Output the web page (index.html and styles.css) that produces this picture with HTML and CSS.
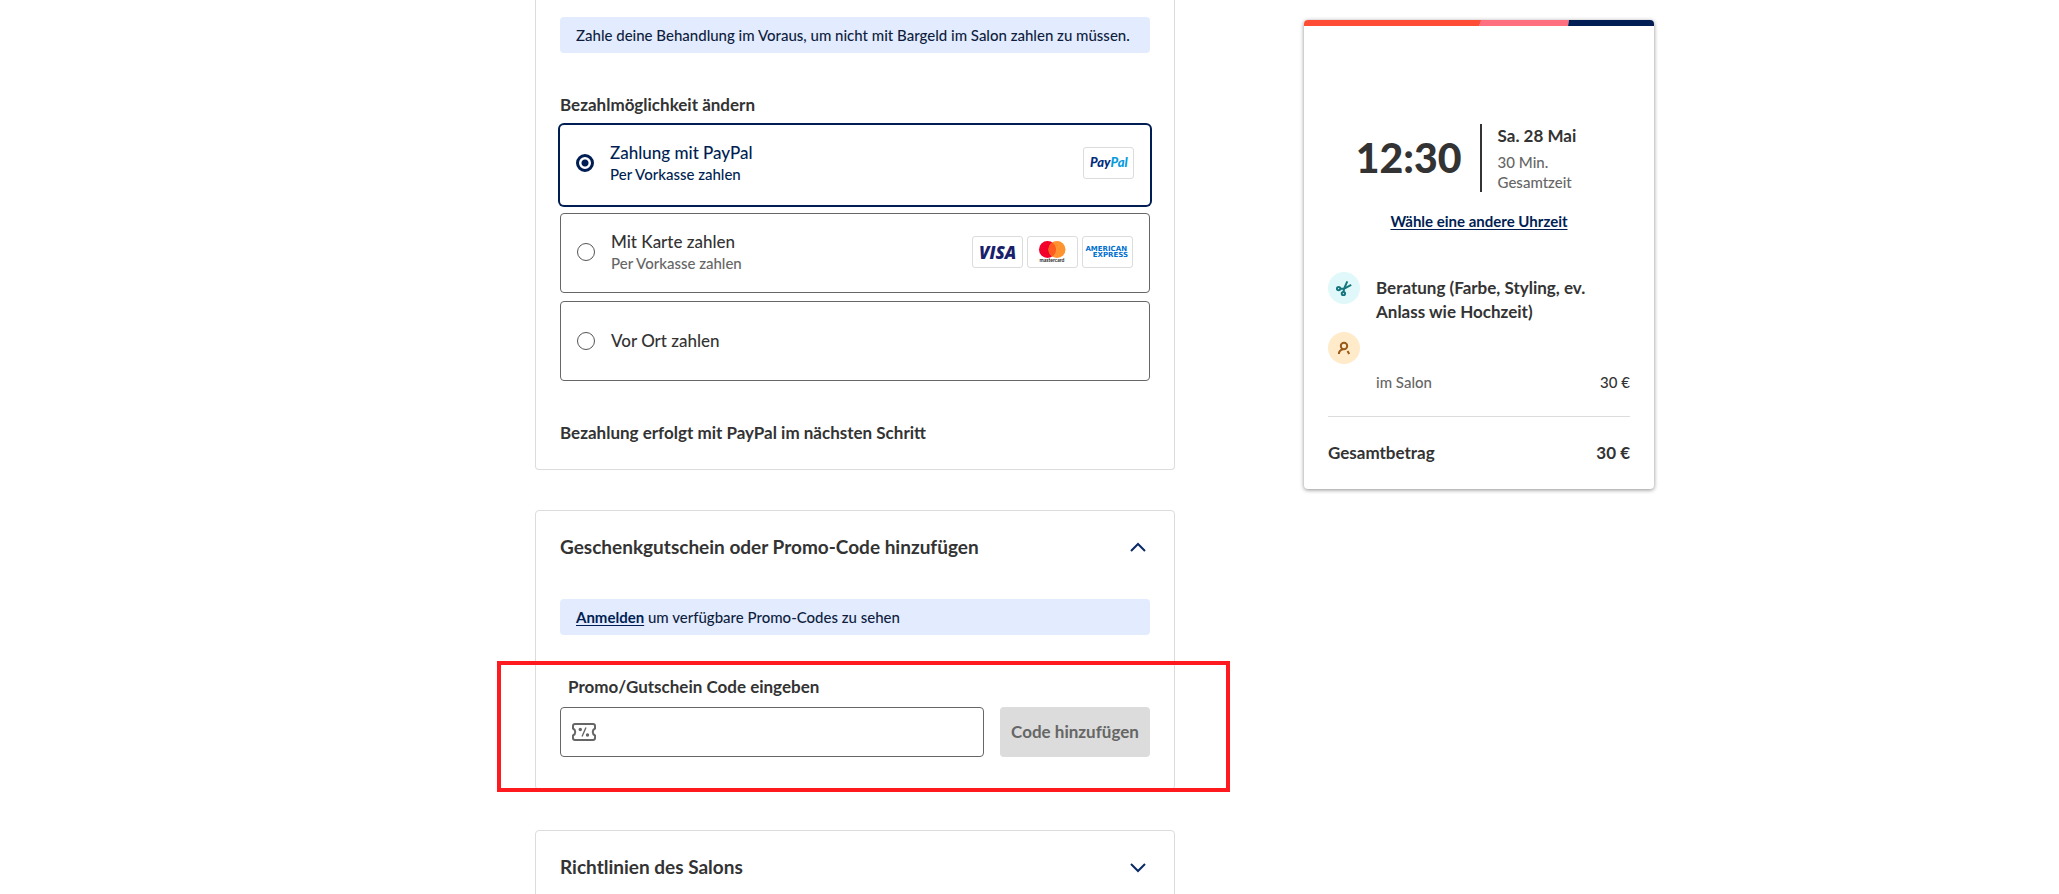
FILE: index.html
```html
<!DOCTYPE html>
<html lang="de">
<head>
<meta charset="utf-8">
<meta name="viewport" content="width=device-width, initial-scale=1">
<title>Bezahlung</title>
<link rel="stylesheet" href="styles.css">
</head>
<body>
<div class="page">
  <main class="steps">
    <section class="card card-payment">
      <p class="notice">Zahle deine Behandlung im Voraus, um nicht mit Bargeld im Salon zahlen zu müssen.</p>
      <fieldset class="methods">
        <legend class="methods-title">Bezahlmöglichkeit ändern</legend>
        <label class="method method-selected">
          <input class="radio" type="radio" name="method" checked>
          <span class="method-text">
            <span class="method-name">Zahlung mit PayPal</span>
            <span class="method-sub">Per Vorkasse zahlen</span>
          </span>
          <span class="logos">
            <svg class="logo" viewBox="1 1 49 30" role="img" aria-label="PayPal"><text x="7" y="20" class="paypal"><tspan fill="#012c7c">Pay</tspan><tspan fill="#069bdd">Pal</tspan></text></svg>
          </span>
        </label>
        <label class="method">
          <input class="radio" type="radio" name="method">
          <span class="method-text">
            <span class="method-name">Mit Karte zahlen</span>
            <span class="method-sub">Per Vorkasse zahlen</span>
          </span>
          <span class="logos">
            <svg class="logo" viewBox="1 1 49 30" role="img" aria-label="Visa"><text x="7" y="23" class="visa">VISA</text></svg>
            <svg class="logo" viewBox="1 1 49 30" role="img" aria-label="Mastercard"><circle cx="20.500" cy="13.500" r="8.500" fill="#f2002b"/><circle cx="30" cy="13.500" r="8.500" fill="#ff9330"/><path d="M25.250 6.450a8.500 8.500 0 0 1 0 14.100a8.500 8.500 0 0 1 0-14.100z" fill="#ff5a1f"/><text x="25" y="26" class="mastercard">mastercard</text></svg>
            <svg class="logo" viewBox="1 1 49 30" role="img" aria-label="American Express"><text x="45" y="15" class="amex">AMERICAN</text><text x="46" y="21" class="amex">EXPRESS</text></svg>
          </span>
        </label>
        <label class="method method-plain">
          <input class="radio" type="radio" name="method">
          <span class="method-text"><span class="method-name">Vor Ort zahlen</span></span>
        </label>
      </fieldset>
      <p class="next-step">Bezahlung erfolgt mit PayPal im nächsten Schritt</p>
    </section>

    <section class="card card-promo">
      <h2 class="card-head">
        <button class="toggle" type="button" aria-expanded="true">Geschenkgutschein oder Promo-Code hinzufügen
          <svg class="chevron" viewBox="0 0 24 24" aria-hidden="true"><path d="M5 16l7-7 7 7"/></svg>
        </button>
      </h2>
      <p class="notice"><a class="notice-link" href="#login">Anmelden</a> um verfügbare Promo-Codes zu sehen</p>
      <form class="promo">
        <label class="promo-label" for="code">Promo/Gutschein Code eingeben</label>
        <div class="promo-row">
          <div class="field">
            <svg class="ticket" viewBox="0 0 24 18" aria-hidden="true"><path d="M3 1h18a2 2 0 0 1 2 2v2.500c-3 1.500-3 5.500 0 7V15a2 2 0 0 1-2 2H3a2 2 0 0 1-2-2v-2.500c3-1.500 3-5.500 0-7V3a2 2 0 0 1 2-2z"/><path d="M14 4.500l-4 9" stroke-width="1.400"/><circle cx="8.300" cy="6.500" r="1.700"/><circle cx="15.500" cy="12" r="1.700"/></svg>
            <input class="code" id="code" type="text">
          </div>
          <button class="add" type="button">Code hinzufügen</button>
        </div>
      </form>
      <div class="highlight" aria-hidden="true"></div>
    </section>

    <section class="card card-policy">
      <h2 class="card-head">
        <button class="toggle" type="button" aria-expanded="false">Richtlinien des Salons
          <svg class="chevron" viewBox="0 0 24 24" aria-hidden="true"><path d="M5 9l7 7 7-7"/></svg>
        </button>
      </h2>
    </section>
  </main>

  <aside class="summary">
    <svg class="stripe" viewBox="0 0 350 6" preserveAspectRatio="none" aria-hidden="true"><path fill="#ff4c35" d="M0 0h178l-3 6H0z"/><path fill="#ff6f80" d="M177 0h88l-1 6h-89z"/><path fill="#001e53" d="M265 0h85v6h-86z"/></svg>
    <div class="summary-body">
      <div class="when">
        <span class="time">12:30</span>
        <div class="when-info">
          <p class="date">Sa. 28 Mai</p>
          <p class="duration">30 Min.<br>Gesamtzeit</p>
        </div>
      </div>
      <a class="change" href="#time">Wähle eine andere Uhrzeit</a>
      <div class="item">
        <span class="badge badge-cut"><svg viewBox="0 0 16 16" aria-hidden="true"><path d="M11.300 1.300L8 8.800L7.600 12M15.200 4.800L8 8.800H4.500"/><circle cx="2.600" cy="8.600" r="1.700"/><circle cx="7.400" cy="13.600" r="1.700"/></svg></span>
        <p class="item-name">Beratung (Farbe, Styling, ev. Anlass wie Hochzeit)</p>
      </div>
      <div class="item item-person">
        <span class="badge badge-person"><svg viewBox="0 0 16 16" aria-hidden="true"><circle cx="8" cy="6" r="3.200"/><path d="M2.800 14C3 11.500 4.500 9.800 7 9.200M11.500 11l1.700 3"/></svg></span>
      </div>
      <div class="line"><span class="place">im Salon</span><span class="price">30 €</span></div>
      <div class="total"><span>Gesamtbetrag</span><span>30 €</span></div>
    </div>
  </aside>
</div>
</body>
</html>
```
FILE: styles.css
```css
* { box-sizing: border-box; }
body {
  margin: 0;
  background: #fff;
  color: #333;
  font: 500 17px/24px Lato, "Liberation Sans", sans-serif;
}
p, h2, fieldset { margin: 0; padding: 0; border: 0; }
button, input { font: inherit; color: inherit; }
.page {
  display: grid;
  grid-template-columns: minmax(0, 640px) 350px;
  column-gap: 129px;
  justify-content: center;
  align-items: start;
  padding-left: 130px;
  height: 100vh;
  overflow: hidden;
}
.steps { display: flex; flex-direction: column; gap: 40px; }
.card {
  position: relative;
  border: 1px solid #dcdcdc;
  border-radius: 4px;
  padding: 0 24px;
}
.card-payment {
  border-top: 0;
  border-radius: 0 0 4px 4px;
  padding-top: 17px;
  padding-bottom: 24px;
}
.notice {
  background: #e3ecfe;
  border-radius: 4px;
  color: #0f1e3f;
  font-size: 15px;
  line-height: 20px;
  padding: 8px 16px;
}
.notice-link { color: #001e53; font-weight: 700; text-underline-offset: 2px; }
.methods { display: flex; flex-direction: column; gap: 8px; margin-top: 40px; }
.methods-title { padding: 0; margin-bottom: 8px; font-weight: 700; }
.method {
  display: flex;
  align-items: center;
  gap: 16px;
  height: 80px;
  padding: 0 16px 2px;
  border: 1px solid #666;
  border-radius: 4px;
}
.method-plain { padding-bottom: 0; }
.method-selected {
  border: 0;
  box-shadow: 0 0 0 2px #001e53;
  color: #001e53;
  padding-bottom: 4px;
}
.radio {
  appearance: none;
  flex: none;
  width: 18px;
  height: 18px;
  margin: 0;
  border: 1px solid #555;
  border-radius: 50%;
}
.radio:checked {
  border: 3px solid #001e53;
  background: radial-gradient(circle, #001e53 3px, #fff 4px);
}
.method-text { display: flex; flex-direction: column; flex: 1; }
.method-name { line-height: 22px; }
.method-sub { font-size: 15px; line-height: 20px; color: #666; }
.method-selected .method-sub { color: inherit; }
.logos { display: flex; gap: 4px; }
.logo {
  width: 51px;
  height: 32px;
  border: 1px solid #dcdcdc;
  border-radius: 3px;
}
.paypal { font: italic 900 13px Lato, sans-serif; }
.visa { font: italic 800 17px "Open Sans", sans-serif; fill: #1a1f6c; }
.mastercard { font: 700 5px Lato, sans-serif; text-anchor: middle; fill: #222; }
.amex { font: 700 7px "DejaVu Sans", sans-serif; text-anchor: end; fill: #006fcf; }
.next-step { margin-top: 40px; font-weight: 700; }
.card-head { font-size: 19px; font-weight: 700; }
.toggle {
  display: flex;
  justify-content: space-between;
  align-items: center;
  width: 100%;
  padding: 24px 0;
  border: 0;
  background: none;
  text-align: left;
}
.chevron { width: 24px; height: 24px; fill: none; stroke: #0a2a66; stroke-width: 2; }
.card-promo .notice { margin-top: 16px; }
.card-promo { padding-bottom: 32px; }
.promo-label { display: block; margin-top: 40px; padding: 0 8px; font-weight: 700; }
.promo-row { display: grid; grid-template-columns: minmax(0, 1fr) 150px; gap: 16px; margin-top: 8px; }
.field {
  display: flex;
  align-items: center;
  height: 50px;
  padding: 0 11px;
  border: 1px solid #666;
  border-radius: 4px;
}
.ticket { flex: none; width: 24px; height: 18px; fill: none; stroke: #666; stroke-width: 2; }
.ticket circle { fill: #666; stroke: none; }
.code { flex: 1; min-width: 0; height: 40px; margin-left: 8px; border: 0; outline: 0; background: none; }
.add { border: 0; border-radius: 4px; padding: 0; background: #dcdcdc; color: #666; font-weight: 700; }
.highlight {
  position: absolute;
  inset: 150px -56px -3px -39px;
  border: 4px solid #ff1a1f;
  pointer-events: none;
}
.card-policy { height: 120px; }
.summary {
  margin-top: 20px;
  border-radius: 4px;
  overflow: hidden;
  background: #fff;
  box-shadow: 0 1px 4px rgba(0, 0, 0, .45);
}
.stripe { display: block; width: 100%; height: 6px; }
.summary-body { display: flex; flex-direction: column; padding: 98px 24px 24px; }
.when { display: flex; justify-content: center; align-items: center; padding-right: 26px; }
.time { padding-right: 18px; font-size: 41px; line-height: 48px; font-weight: 900; }
.when-info { border-left: 2px solid #333; padding-left: 16px; height: 68px; }
.date { font-weight: 700; }
.duration { font-size: 15px; line-height: 20px; color: #666; margin-top: 4px; }
.change {
  align-self: center;
  margin-top: 17px;
  color: #001e53;
  font-size: 15px;
  font-weight: 700;
  text-underline-offset: 2px;
}
.item { display: flex; gap: 16px; margin-top: 39px; }
.item-person { margin-top: 8px; }
.item-name { padding-top: 4px; font-weight: 700; }
.badge { display: grid; place-items: center; flex: none; width: 32px; height: 32px; border-radius: 50%; }
.badge svg { width: 16px; height: 16px; fill: none; stroke: currentColor; stroke-width: 2; }
.badge-cut { background: #e0f8f9; color: #16777f; }
.badge-person { background: #ffebc9; color: #9a5a1a; }
.line {
  display: flex;
  justify-content: space-between;
  margin-top: 6px;
  padding: 0 0 22px 48px;
  border-bottom: 1px solid #dcdcdc;
  font-size: 15px;
}
.place { color: #666; }
.total { display: flex; justify-content: space-between; margin-top: 24px; font-weight: 700; }
```
